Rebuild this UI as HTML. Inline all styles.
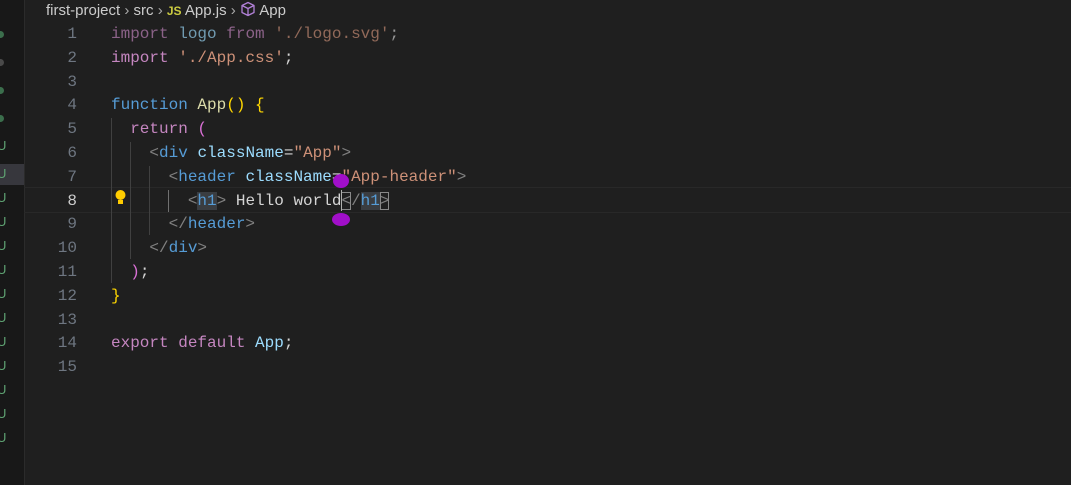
<!DOCTYPE html><html><head><style>
body{margin:0;width:1071px;height:485px;background:#1f1f1f;overflow:hidden;position:relative;font-family:"Liberation Mono",monospace}
.strip{position:absolute;left:0;top:0;width:24px;height:485px;background:#181818;border-right:1px solid #2b2b2b}
.dot{position:absolute;left:-3px;width:7px;height:7px;border-radius:50%;background:#3b6e4c}
.u{position:absolute;left:-3px;color:#5fa473;font:13px "Liberation Sans",sans-serif}
.bc{position:absolute;left:46px;top:1px;font:15px "Liberation Sans",sans-serif;color:#cccccc;white-space:nowrap}
.ln{position:absolute;left:30px;width:47px;text-align:right;color:#6e7681;font-size:16px;line-height:24px}
.code{position:absolute;left:111px;font-size:16px;color:#d4d4d4;white-space:pre;line-height:24px}
.k{color:#c586c0}.v{color:#9cdcfe}.s{color:#ce9178}.f{color:#dcdcaa}.b{color:#569cd6}.t{color:#808080}.y{color:#ffd700}.p{color:#da70d6}
.cur{position:absolute;left:24px;right:0;top:187px;height:24px;border-top:1px solid #282828;border-bottom:1px solid #282828}
.guide{position:absolute;width:1px;background:#404040}
</style></head><body>
<div class="strip"></div>
<div style="position:absolute;left:0;top:164px;width:24px;height:21px;background:#37373d"></div>
<div class="dot" style="top:31px"></div><div class="dot" style="top:59px;background:#4a4a4a"></div><div class="dot" style="top:87px"></div><div class="dot" style="top:115px"></div>
<div class="u" style="top:138px">U</div><div class="u" style="top:166px">U</div><div class="u" style="top:190px">U</div><div class="u" style="top:214px">U</div><div class="u" style="top:238px">U</div><div class="u" style="top:262px">U</div><div class="u" style="top:286px">U</div><div class="u" style="top:310px">U</div><div class="u" style="top:334px">U</div><div class="u" style="top:358px">U</div><div class="u" style="top:382px">U</div><div class="u" style="top:406px">U</div><div class="u" style="top:430px">U</div>
<div class="bc">first-project <span style="color:#aaa">›</span> src <span style="color:#aaa">›</span> <b style="color:#cbcb41;font-size:12px">JS</b> App.js <span style="color:#aaa">›</span> <svg width="16" height="16" viewBox="0 0 16 16" style="vertical-align:-2px"><path d="M8 1.5L14 4.5V11.5L8 14.5L2 11.5V4.5Z M2 4.5L8 7.5L14 4.5 M8 7.5V14.5" fill="none" stroke="#b180d7" stroke-width="1.3" stroke-linejoin="round"/></svg> App</div>
<div class="cur"></div>
<div class="guide" style="left:111px;top:118px;height:165px"></div>
<div class="guide" style="left:130px;top:142px;height:117px"></div>
<div class="guide" style="left:149px;top:166px;height:69px"></div>
<div class="guide" style="left:168px;top:190px;height:22px;background:#707070"></div>
<div style="position:absolute;left:114px;top:189px;width:13px;height:17px"><svg width="13" height="17"><circle cx="6.5" cy="6" r="5" fill="#ffcc00"/><rect x="4" y="11" width="5" height="4" fill="#ffcc00"/></svg></div>

<div class="ln" style="top:22px">1</div><div class="code" style="top:22px;opacity:.65"><span class="k">import</span> <span class="v">logo</span> <span class="k">from</span> <span class="s">'./logo.svg'</span>;</div>
<div class="ln" style="top:46px">2</div><div class="code" style="top:46px"><span class="k">import</span> <span class="s">'./App.css'</span>;</div>
<div class="ln" style="top:70px">3</div>
<div class="ln" style="top:93px">4</div><div class="code" style="top:93px"><span class="b">function</span> <span class="f">App</span><span class="y">()</span> <span class="y">{</span></div>
<div class="ln" style="top:117px">5</div><div class="code" style="top:117px">  <span class="k">return</span> <span class="p">(</span></div>
<div class="ln" style="top:141px">6</div><div class="code" style="top:141px">    <span class="t">&lt;</span><span class="b">div</span> <span class="v">className</span>=<span class="s">"App"</span><span class="t">&gt;</span></div>
<div class="ln" style="top:165px">7</div><div class="code" style="top:165px">      <span class="t">&lt;</span><span class="b">header</span> <span class="v">className</span>=<span class="s">"App-header"</span><span class="t">&gt;</span></div>
<div class="ln" style="top:189px;color:#ccc">8</div><div class="code" style="top:189px">        <span class="t">&lt;</span><span class="b" style="background:#3a3d41">h1</span><span class="t">&gt;</span> Hello world<span class="t" style="outline:1px solid #888;outline-offset:-1px">&lt;</span><span class="t">/</span><span class="b" style="background:#3a3d41">h1</span><span class="t" style="outline:1px solid #888;outline-offset:-1px">&gt;</span></div>
<div class="ln" style="top:212px">9</div><div class="code" style="top:212px">      <span class="t">&lt;/</span><span class="b">header</span><span class="t">&gt;</span></div>
<div class="ln" style="top:236px">10</div><div class="code" style="top:236px">    <span class="t">&lt;/</span><span class="b">div</span><span class="t">&gt;</span></div>
<div class="ln" style="top:260px">11</div><div class="code" style="top:260px">  <span class="p">)</span>;</div>
<div class="ln" style="top:284px">12</div><div class="code" style="top:284px"><span class="y">}</span></div>
<div class="ln" style="top:308px">13</div>
<div class="ln" style="top:331px">14</div><div class="code" style="top:331px"><span class="k">export</span> <span class="k">default</span> <span class="v">App</span>;</div>
<div class="ln" style="top:355px">15</div>

<div style="position:absolute;left:341px;top:190px;width:1px;height:21px;background:#aeafad"></div>
<div style="position:absolute;left:333px;top:174px;width:16px;height:14px;border-radius:50%;background:#a10fc9"></div>
<div style="position:absolute;left:332px;top:213px;width:18px;height:13px;border-radius:50%;background:#a10fc9"></div>
</body></html>
